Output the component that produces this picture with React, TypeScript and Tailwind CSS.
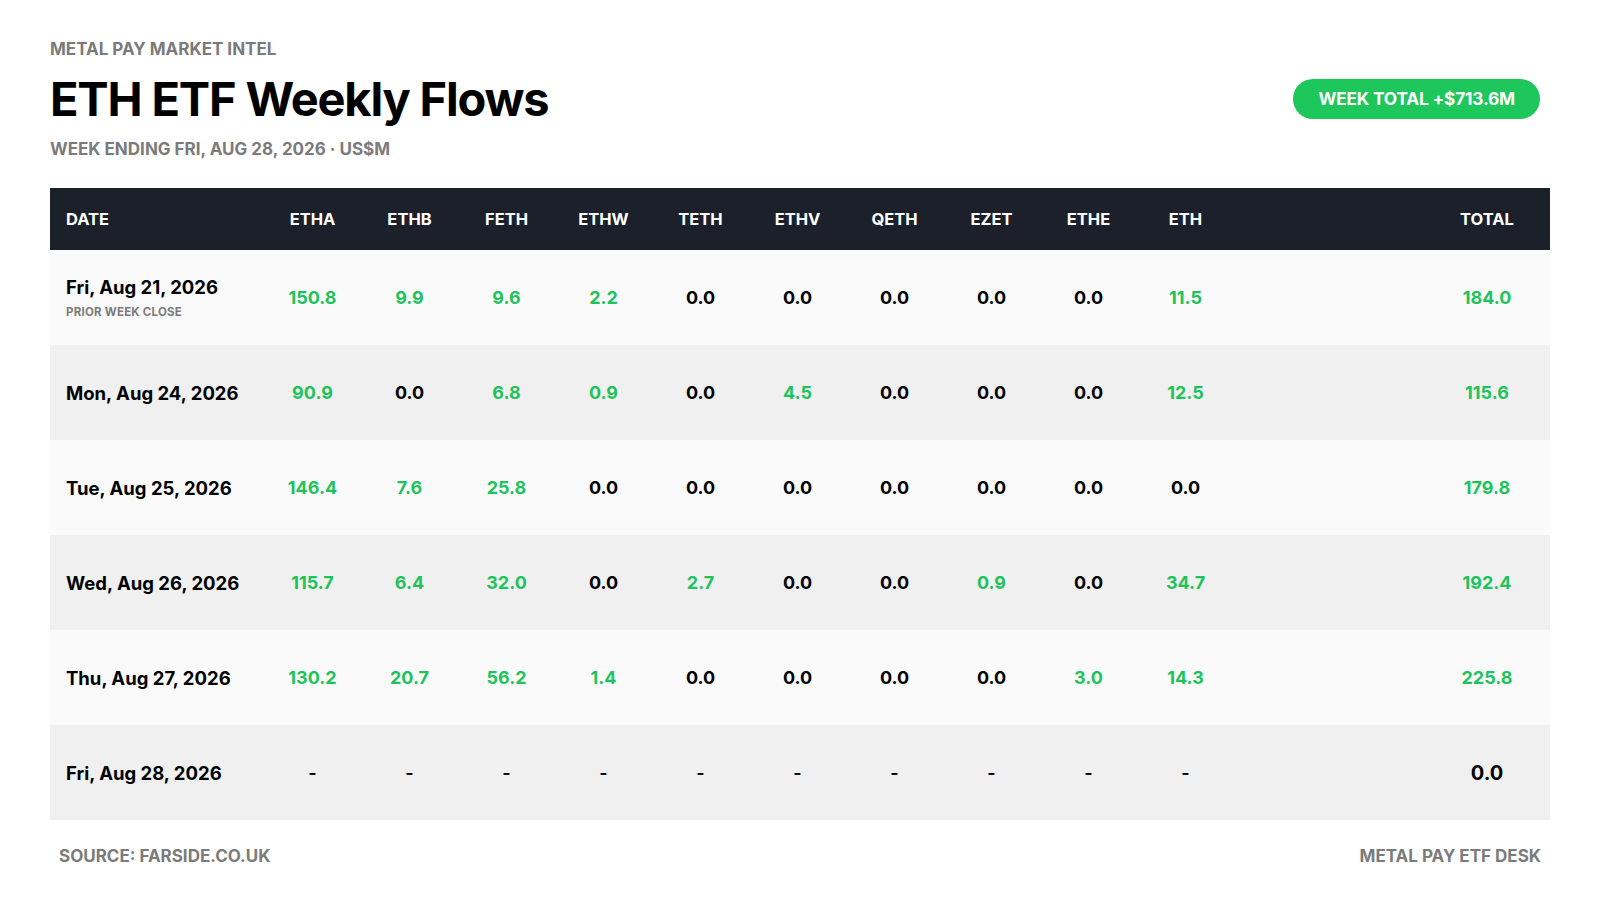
const TICKERS = ["ETHA", "ETHB", "FETH", "ETHW", "TETH", "ETHV", "QETH", "EZET", "ETHE", "ETH"];

type Row = {
  date: string;
  note?: string;
  values: (number | null)[];
  total: number;
};

const rows: Row[] = [
  { date: "Fri, Aug 21, 2026", note: "PRIOR WEEK CLOSE", values: [150.8, 9.9, 9.6, 2.2, 0, 0, 0, 0, 0, 11.5], total: 184.0 },
  { date: "Mon, Aug 24, 2026", values: [90.9, 0, 6.8, 0.9, 0, 4.5, 0, 0, 0, 12.5], total: 115.6 },
  { date: "Tue, Aug 25, 2026", values: [146.4, 7.6, 25.8, 0, 0, 0, 0, 0, 0, 0], total: 179.8 },
  { date: "Wed, Aug 26, 2026", values: [115.7, 6.4, 32.0, 0, 2.7, 0, 0, 0.9, 0, 34.7], total: 192.4 },
  { date: "Thu, Aug 27, 2026", values: [130.2, 20.7, 56.2, 1.4, 0, 0, 0, 0, 3.0, 14.3], total: 225.8 },
  { date: "Fri, Aug 28, 2026", values: [null, null, null, null, null, null, null, null, null, null], total: 0 },
];

const grid = "grid grid-cols-[214px_repeat(10,97px)_1fr_126px] items-center";

function Cell({ value }: { value: number | null }) {
  if (value === null) return <div className="text-center text-[18px] font-semibold text-black">-</div>;
  const color = value > 0 ? "text-[#1fc35b]" : value < 0 ? "text-[#e5484d]" : "text-black";
  return <div className={`text-center text-[18px] font-bold ${color}`}>{value.toFixed(1)}</div>;
}

export default function App() {
  return (
    <div className="h-[900px] w-[1600px] bg-white px-[50px] pt-[39px] text-black" style={{ fontFamily: "Inter, 'Noto Sans', sans-serif" }}>
      <div className="flex items-start justify-between">
        <div>
          <div className="text-[17px] font-bold leading-5 text-[#7b7b7b]">METAL PAY MARKET INTEL</div>
          <h1 className="mt-[12px] text-[47px] font-bold leading-[56px] tracking-[-0.025em]">ETH ETF Weekly Flows</h1>
          <div className="mt-[12px] text-[17px] font-bold leading-5 text-[#7b7b7b]">WEEK ENDING FRI, AUG 28, 2026 · US$M</div>
        </div>
        <div className="mt-[40px] mr-[10px] flex h-[40px] items-center rounded-full bg-[#1ec75c] px-[25px] text-[17.3px] font-bold tracking-[-0.01em] text-white">
          WEEK TOTAL +$713.6M
        </div>
      </div>

      <div className="mt-[29px]">
        <div className={`${grid} h-[62px] bg-[#1b202b] text-[16.5px] font-bold text-white`}>
          <div className="pl-[16px]">DATE</div>
          {TICKERS.map((t) => (
            <div key={t} className="text-center">{t}</div>
          ))}
          <div />
          <div className="text-center">TOTAL</div>
        </div>
        {rows.map((row, i) => {
          const isLast = i === rows.length - 1;
          return (
            <div key={row.date} className={`${grid} h-[95px] ${i % 2 === 0 ? "bg-[#fafafa]" : "bg-[#f0f0f0]"}`}>
              <div className="pl-[16px]">
                <div className="text-[18.5px] font-bold leading-6">{row.date}</div>
                {row.note && <div className="mt-[5px] text-[11.5px] font-bold leading-4 tracking-[0.02em] text-[#7b7b7b]">{row.note}</div>}
              </div>
              {row.values.map((v, j) => (
                <Cell key={j} value={v} />
              ))}
              <div />
              {isLast ? (
                <div className="text-center text-[20px] font-bold text-black">{row.total.toFixed(1)}</div>
              ) : (
                <Cell value={row.total} />
              )}
            </div>
          );
        })}
      </div>

      <div className="mt-[24px] flex justify-between px-[9px] text-[17px] font-bold text-[#7b7b7b]">
        <div>SOURCE: FARSIDE.CO.UK</div>
        <div>METAL PAY ETF DESK</div>
      </div>
    </div>
  );
}
